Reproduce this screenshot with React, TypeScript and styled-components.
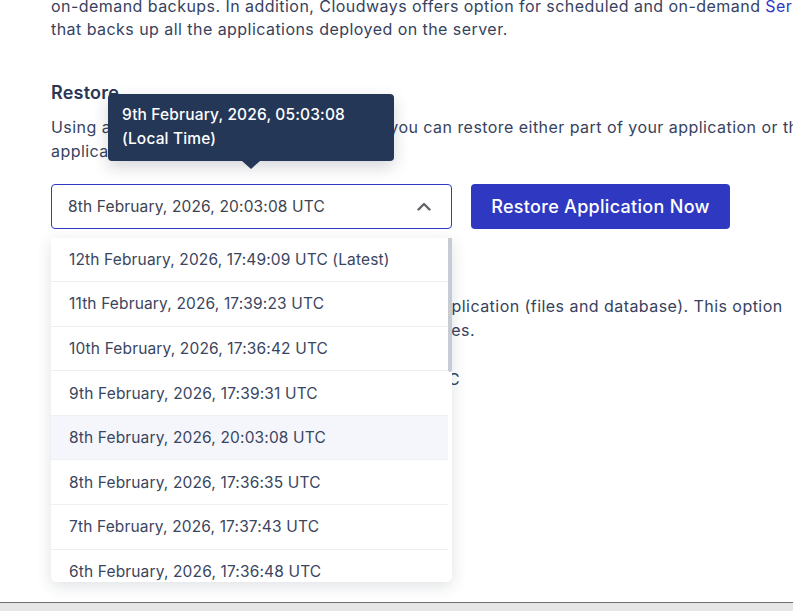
import styled, { createGlobalStyle } from "styled-components";

const backups = [
  "12th February, 2026, 17:49:09 UTC (Latest)",
  "11th February, 2026, 17:39:23 UTC",
  "10th February, 2026, 17:36:42 UTC",
  "9th February, 2026, 17:39:31 UTC",
  "8th February, 2026, 20:03:08 UTC",
  "8th February, 2026, 17:36:35 UTC",
  "7th February, 2026, 17:37:43 UTC",
  "6th February, 2026, 17:36:48 UTC",
  "5th February, 2026, 17:38:12 UTC",
];

const selected = "8th February, 2026, 20:03:08 UTC";

const GlobalStyle = createGlobalStyle`
  html, body {
    margin: 0;
    padding: 0;
    background: #ffffff;
  }
  body {
    font-family: Inter, "Noto Sans", "Liberation Sans", sans-serif;
    color: #36425e;
  }
`;

const ChevronUp = () => (
  <svg width="14" height="9" viewBox="0 0 14 9" fill="none">
    <path
      d="M1.5 7.5L7 2L12.5 7.5"
      stroke="#5f6368"
      strokeWidth="2.4"
      strokeLinecap="round"
      strokeLinejoin="round"
    />
  </svg>
);

const App = () => (
  <>
    <GlobalStyle />
    <Viewport>
      <Content>
        <Intro>
          Cloudways takes automated backups of your servers as per the frequency you set, and also lets you take
          <br />
          on-demand backups. In addition, Cloudways offers option for scheduled and on-demand{" "}
          <Link>Server Backups</Link> feature
          <br />
          that backs up all the applications deployed on the server.
        </Intro>

        <Section>
          <Heading>Restore</Heading>
          <Text>
            Using a backup of a specific date or time, you can restore either part of your application or the whole
            <br />
            application to that point in time.
          </Text>

          <Controls>
            <SelectWrap>
              <Select>
                <span>{selected}</span>
                <ChevronUp />
              </Select>

              <Tooltip>
                9th February, 2026, 05:03:08
                <br />
                (Local Time)
              </Tooltip>

              <Menu>
                <ScrollThumb />
                {backups.map((b) => (
                  <Option key={b} active={b === selected}>
                    {b}
                  </Option>
                ))}
              </Menu>
            </SelectWrap>
            <PrimaryButton>Restore Application Now</PrimaryButton>
          </Controls>

          <SubHeading>Restore Full Application</SubHeading>
          <Text>
            This option will allow you to restore your whole application (files and database). This option
            <br />
            will overwrite all of your existing files and databases.
          </Text>
          <Meta>Last backup on: 12th February, 2026, 17:49:09 UTC</Meta>
        </Section>
      </Content>
      <HScrollbar />
    </Viewport>
  </>
);

const Viewport = styled.div`
  position: relative;
  width: 793px;
  height: 611px;
  overflow: hidden;
  display: flex;
  flex-direction: column;
`;

const Content = styled.div`
  flex: 1;
  overflow: hidden;
  padding-left: 51px;
  width: 1100px;
`;

const Text = styled.p`
  margin: 10px 0 0;
  font-size: 16px;
  letter-spacing: 0.45px;
  line-height: 24.5px;
  color: #36425e;
  white-space: nowrap;
`;

const Intro = styled(Text)`
  margin-top: -29px;
  line-height: 23.5px;
`;

const Link = styled.a`
  color: #2f38c4;
  text-decoration: none;
`;

const Section = styled.div`
  padding-top: 39px;
`;

const Heading = styled.h3`
  margin: 0;
  font-size: 18px;
  line-height: 24px;
  font-weight: 600;
  letter-spacing: 0.2px;
  color: #2a3654;
`;

const SubHeading = styled.h4`
  margin: 19px 0 0;
  font-size: 16px;
  line-height: 24px;
  font-weight: 600;
  color: #2a3654;
  & + p {
    margin-top: 22px;
  }
`;

const Meta = styled.div`
  margin-top: 24px;
  font-size: 16px;
  letter-spacing: 0.45px;
  line-height: 24px;
  white-space: nowrap;
`;

const Controls = styled.div`
  display: flex;
  gap: 19px;
  margin-top: 20px;
`;

const SelectWrap = styled.div`
  position: relative;
  width: 401px;
`;

const Select = styled.div`
  box-sizing: border-box;
  height: 45px;
  display: flex;
  align-items: center;
  justify-content: space-between;
  padding: 0 20px 0 16px;
  border: 1px solid #3038c4;
  border-radius: 4px;
  background: #fff;
  font-size: 15.5px;
  letter-spacing: 0.15px;
  color: #3d4350;
`;

const Tooltip = styled.div`
  position: absolute;
  left: 57px;
  top: -90px;
  width: 286px;
  box-sizing: border-box;
  padding: 9px 14px 10px;
  background: #253757;
  border-radius: 4px;
  color: #fff;
  font-size: 15.5px;
  letter-spacing: 0.15px;
  font-weight: 500;
  line-height: 24px;
  box-shadow: 0 6px 16px rgba(20, 30, 50, 0.18);
  z-index: 3;

  &::after {
    content: "";
    position: absolute;
    left: 134px;
    bottom: -8px;
    border-left: 9px solid transparent;
    border-right: 9px solid transparent;
    border-top: 8px solid #253757;
  }
`;

const Menu = styled.div`
  position: absolute;
  top: 54px;
  left: 0;
  width: 401px;
  height: 344px;
  overflow: hidden;
  background: #fff;
  border-radius: 0 0 6px 6px;
  box-shadow: 0 4px 16px rgba(30, 40, 60, 0.14);
  z-index: 2;
`;

const ScrollThumb = styled.div`
  position: absolute;
  right: 0;
  top: 0;
  width: 4px;
  height: 134px;
  background: #c6cbd4;
  border-radius: 0 0 2px 2px;
`;

const Option = styled.div<{ active?: boolean }>`
  box-sizing: border-box;
  height: 44.6px;
  margin-right: 4px;
  display: flex;
  align-items: center;
  padding-left: 18px;
  font-size: 15.5px;
  letter-spacing: 0.15px;
  color: #3a4560;
  background: ${({ active }) => (active ? "#f4f6fb" : "#fff")};
  border-bottom: 1px solid #eef0f4;
`;

const PrimaryButton = styled.button`
  width: 259px;
  height: 45px;
  border: 0;
  border-radius: 4px;
  background: #2f38c1;
  color: #fff;
  font-family: inherit;
  font-size: 18px;
  letter-spacing: 0.3px;
  font-weight: 500;
  cursor: pointer;
`;

const HScrollbar = styled.div`
  height: 8px;
  flex-shrink: 0;
  border-top: 1px solid #707070;
  background: #e6e6e6;
`;

export default App;
